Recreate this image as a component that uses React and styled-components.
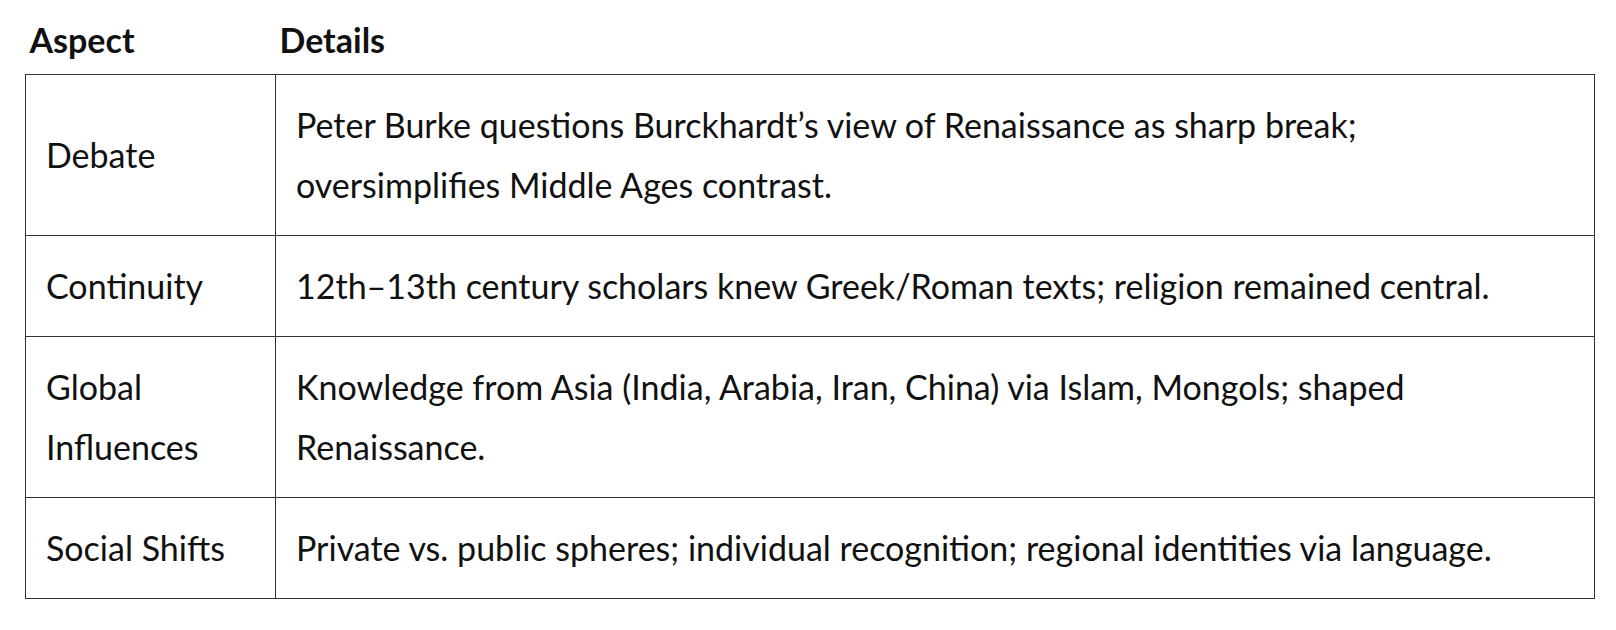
import React from "react";
import styled, { createGlobalStyle } from "styled-components";

const Global = createGlobalStyle`
  html, body { margin: 0; padding: 0; background: #fff; }
  body { font-family: Lato, "Open Sans", sans-serif; color: #111; }
`;

const Page = styled.div`
  padding: 10px 21px 0 25px;
`;

const Table = styled.table`
  width: 1570px;
  border-collapse: collapse;
  table-layout: fixed;
`;

const HeadCell = styled.th`
  box-sizing: border-box;
  text-align: left;
  font-weight: 700;
  font-size: 34px;
  line-height: 60px;
  padding: 0 4px 4px;
  width: ${(p) => p.$w || "auto"};
`;

const Cell = styled.td`
  border: 1.5px solid #333;
  font-size: 34px;
  line-height: 60px;
  padding: 20px 36px 20px 20px;
  vertical-align: middle;
`;

const rows = [
  ["Debate", "Peter Burke questions Burckhardt’s view of Renaissance as sharp break; oversimplifies Middle Ages contrast."],
  ["Continuity", "12th–13th century scholars knew Greek/Roman texts; religion remained central."],
  ["Global Influences", "Knowledge from Asia (India, Arabia, Iran, China) via Islam, Mongols; shaped Renaissance."],
  ["Social Shifts", "Private vs. public spheres; individual recognition; regional identities via language."],
];

export default function App() {
  return (
    <Page>
      <Global />
      <Table>
        <thead>
          <tr>
            <HeadCell $w="250px">Aspect</HeadCell>
            <HeadCell>Details</HeadCell>
          </tr>
        </thead>
        <tbody>
          {rows.map(([a, d]) => (
            <tr key={a}>
              <Cell>{a}</Cell>
              <Cell>{d}</Cell>
            </tr>
          ))}
        </tbody>
      </Table>
    </Page>
  );
}
